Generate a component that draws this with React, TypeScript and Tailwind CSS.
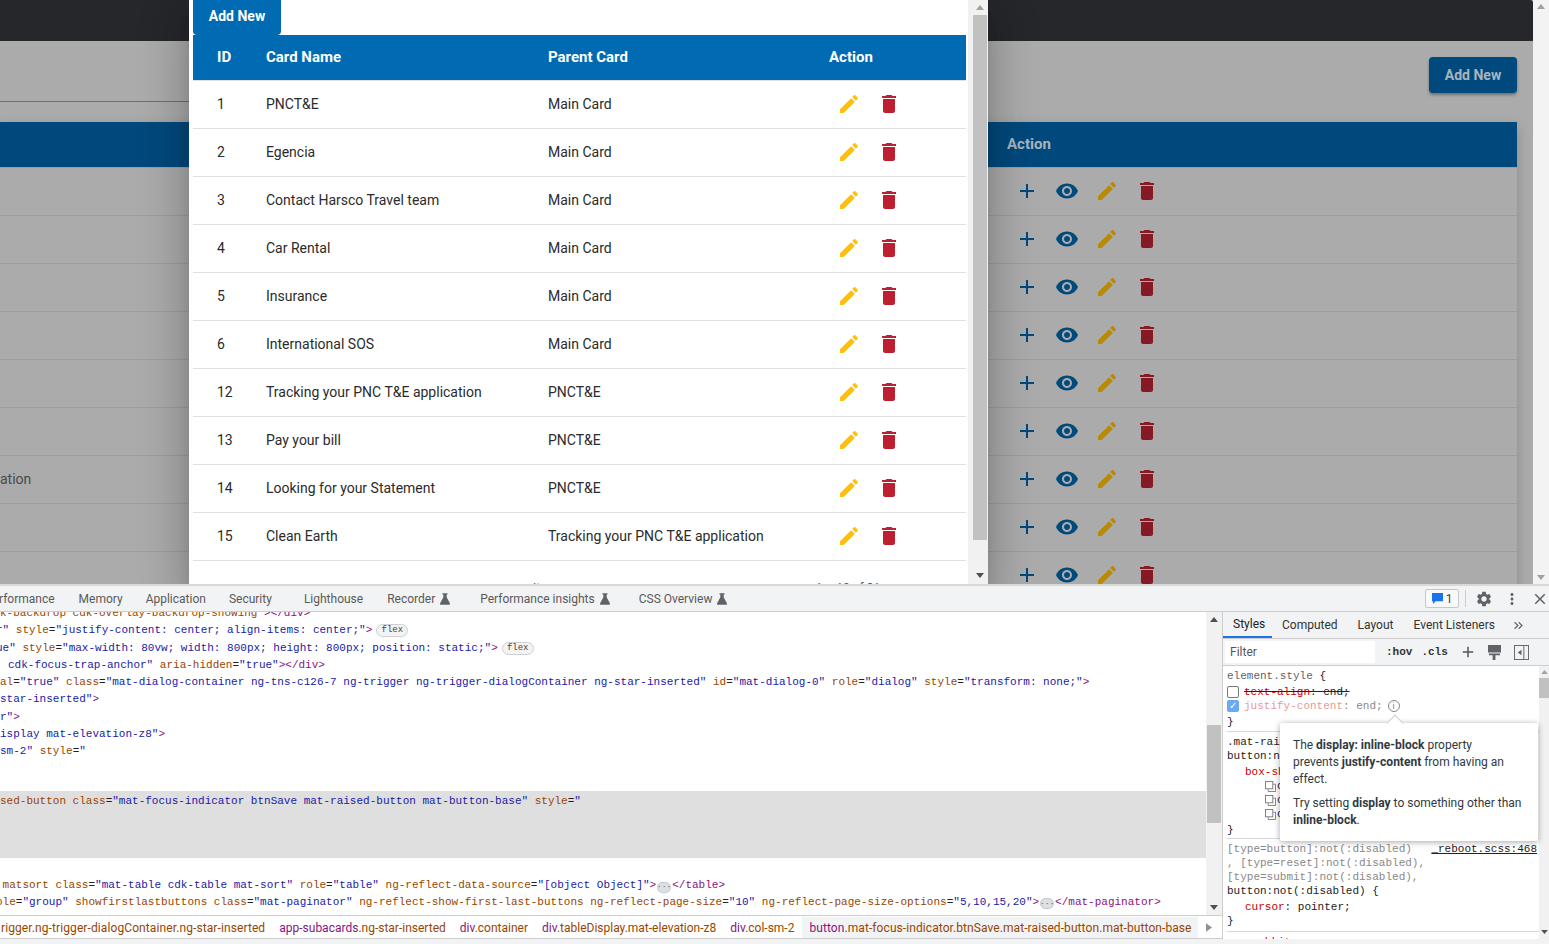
import type { ReactNode } from "react";
import {
  MdAdd,
  MdClose,
  MdDelete,
  MdEdit,
  MdKeyboardDoubleArrowRight,
  MdMoreVert,
  MdSettings,
  MdVisibility,
} from "react-icons/md";

const dialogRows = [
  ["1", "PNCT&E", "Main Card"],
  ["2", "Egencia", "Main Card"],
  ["3", "Contact Harsco Travel team", "Main Card"],
  ["4", "Car Rental", "Main Card"],
  ["5", "Insurance", "Main Card"],
  ["6", "International SOS", "Main Card"],
  ["12", "Tracking your PNC T&E application", "PNCT&E"],
  ["13", "Pay your bill", "PNCT&E"],
  ["14", "Looking for your Statement", "PNCT&E"],
  ["15", "Clean Earth", "Tracking your PNC T&E application"],
];

const backRows = ["", "", "", "", "", "", "ation", "", ""];

const Tag = ({ children }: { children: ReactNode }) => <span className="text-[#881280]">{children}</span>;
const Attr = ({ children }: { children: ReactNode }) => <span className="text-[#994500]">{children}</span>;
const Val = ({ children }: { children: ReactNode }) => <span className="text-[#1a1aa6]">{children}</span>;

const Code = ({ children, className = "" }: { children: ReactNode; className?: string }) => (
  <div className={`h-[17.25px] leading-[17.25px] whitespace-pre ${className}`}>{children}</div>
);

const FlexBadge = () => (
  <span className="inline-block ml-[4px] align-[1px] h-[13px] w-[32px] rounded-full bg-[#f1f3f4] border border-[#d0d0d0] text-center text-[9px] leading-[11px] text-[#444]">
    flex
  </span>
);

const Dots = () => (
  <span className="inline-flex mx-[1px] items-center justify-center align-[-1px] h-[11px] w-[14px] rounded-full bg-[#dde0e3] border border-[#c4c7ca] text-[#555] text-[8px] leading-[6px]">
    ···
  </span>
);

const Arrow = ({ dir, className = "" }: { dir: "up" | "down" | "right"; className?: string }) => {
  const points = dir === "up" ? "0,6 5,0 10,6" : dir === "down" ? "0,0 10,0 5,6" : "0,0 7,5 0,10";
  return (
    <svg viewBox={dir === "right" ? "0 0 7 10" : "0 0 10 6"} className={className} fill="currentColor">
      <polygon points={points} />
    </svg>
  );
};

const Flask = () => (
  <svg viewBox="0 0 12 14" className="w-[10px] h-[12px] ml-[5px] text-[#5f6368]" fill="currentColor">
    <path d="M3 0h6v1.5H8V5l4 7.5c.3.7-.1 1.5-1 1.5H1c-.9 0-1.3-.8-1-1.5L4 5V1.5H3z" />
  </svg>
);

const CopyIcon = () => (
  <svg viewBox="0 0 12 12" className="w-[11px] h-[11px] text-[#777]" fill="none" stroke="currentColor">
    <rect x="0.5" y="0.5" width="8" height="8" />
    <path d="M3.5 9v2.5h8v-8H9" />
  </svg>
);

const DevTab = ({ label, ml, flask }: { label: string; ml: string; flask?: boolean }) => (
  <div className={`flex items-center shrink-0 ${ml}`}>
    <span>{label}</span>
    {flask && <Flask />}
  </div>
);

const Crumb = ({ tag, rest, ml = "ml-[14px]" }: { tag: string; rest: string; ml?: string }) => (
  <span className={`shrink-0 ${ml}`}>
    <Tag>{tag}</Tag>
    <Attr>{rest}</Attr>
  </span>
);

const Prop = ({ children }: { children: ReactNode }) => <span className="text-[#c80000]">{children}</span>;

function BackPage() {
  return (
    <div className="flex h-full bg-[#ababab]">
      <div className="w-[1533px] flex flex-col overflow-hidden">
        <div className="h-[41px] shrink-0 bg-[#25272b] rounded-tr-[3px]" />
        <div className="flex h-[81px] shrink-0">
          <div className="w-[189px] h-[61px] border-b border-[#6f6f6f]" />
          <div className="flex-1 flex justify-end pr-[16px] pt-[16px]">
            <div className="w-[88px] h-[36px] rounded-[4px] bg-[#00497c] text-[#a9b4bc] font-bold text-sm flex items-center justify-center shadow-[0_2px_3px_rgba(0,0,0,0.35)]">
              Add New
            </div>
          </div>
        </div>
        <div className="w-[1517px] shadow-[0_5px_12px_rgba(0,0,0,0.2)]">
          <div className="h-[46px] bg-[#00497c] border-b border-[#9d9d9d] grid grid-cols-[1007px_1fr] items-center text-[#a9b4bc] font-bold text-[15px]">
            <span />
            <span>Action</span>
          </div>
          {backRows.map((text, i) => (
            <div key={i} className="h-[48px] pb-[1px] border-b border-[#9d9d9d] grid grid-cols-[1007px_1fr] items-center text-sm text-[#4a4a4a]">
              <span>{text}</span>
              <div className="flex items-center">
                <span className="w-10 flex justify-center"><MdAdd className="text-[#004a7c] text-2xl" /></span>
                <span className="w-10 flex justify-center"><MdVisibility className="text-[#004a7c] text-2xl" /></span>
                <span className="w-10 flex justify-center"><MdEdit className="text-[#b88a06] text-2xl" /></span>
                <span className="w-10 flex justify-center"><MdDelete className="text-[#851a26] text-2xl" /></span>
              </div>
            </div>
          ))}
        </div>
      </div>
      <div className="w-[16px] bg-[#f3f3f3] flex flex-col items-center justify-between py-[4px] text-[#a0a0a0]">
        <Arrow dir="up" className="w-[8px] h-[5px]" />
        <Arrow dir="down" className="w-[8px] h-[5px]" />
      </div>
    </div>
  );
}

function CardDialog() {
  return (
    <div className="absolute left-[189px] top-0 w-[799px] h-[584px] bg-white flex overflow-hidden shadow-[0_11px_15px_-7px_rgba(0,0,0,0.2),0_24px_38px_3px_rgba(0,0,0,0.14),0_9px_46px_8px_rgba(0,0,0,0.12)]">
      <div className="w-[779px] pl-[4px] pr-[2px] shrink-0">
        <div className="w-[88px] h-[35px] pb-[3px] rounded-b-[4px] bg-[#006ab3] text-white font-bold text-sm flex items-center justify-center">
          Add New
        </div>
        <div className="h-[46px] bg-[#006ab3] border-b border-[#e0e0e0] pl-6 grid grid-cols-[49px_282px_281px_1fr] items-center text-white font-bold text-[15px]">
          <span>ID</span>
          <span>Card Name</span>
          <span>Parent Card</span>
          <span>Action</span>
        </div>
        {dialogRows.map(([id, name, parent]) => (
          <div key={id} className="h-[48px] pb-[1px] border-b border-[#e0e0e0] pl-6 grid grid-cols-[49px_282px_281px_1fr] items-center text-sm text-[#2b2b2b]">
            <span>{id}</span>
            <span>{name}</span>
            <span>{parent}</span>
            <div className="flex items-center">
              <span className="w-10 flex justify-center"><MdEdit className="text-[#ffc107] text-2xl" /></span>
              <span className="w-10 flex justify-center"><MdDelete className="text-[#bd2130] text-2xl" /></span>
            </div>
          </div>
        ))}
        <div className="flex pt-[19px] text-xs text-[#555]">
          <span className="ml-[340px]">Items per page:</span>
          <span className="ml-[200px]">1 – 10 of 31</span>
        </div>
      </div>
      <div className="flex-1 bg-[#f1f1f1] flex flex-col items-center justify-between pt-[5px] pb-[6px] pl-[3px] relative text-[#505050]">
        <Arrow dir="up" className="w-[8px] h-[5px] text-[#a3a3a3]" />
        <div className="w-[14px] h-[525px] mt-[5px] mb-auto bg-[#c1c1c1]" />
        <Arrow dir="down" className="w-[8px] h-[5px]" />
      </div>
    </div>
  );
}

function ElementsPane() {
  return (
    <div className="w-[1206px] h-full overflow-hidden font-['Liberation_Mono',monospace] text-[11px] text-[#222]">
      <div className="-mt-[7px]">
        <Code><Attr>k-backdrop cdk-overlay-backdrop-showing</Attr><Val>"</Val><Tag>&gt;&lt;/div&gt;</Tag></Code>
        <Code className="-ml-[4px]"><Val>r"</Val> <Attr>style</Attr>=<Val>"justify-content: center; align-items: center;"</Val><Tag>&gt;</Tag><FlexBadge /></Code>
        <Code className="-ml-[4px]"><Val>ue"</Val> <Attr>style</Attr>=<Val>"max-width: 80vw; width: 800px; height: 800px; position: static;"</Val><Tag>&gt;</Tag><FlexBadge /></Code>
        <Code className="pl-[8px]"><Val>cdk-focus-trap-anchor"</Val> <Attr>aria-hidden</Attr>=<Val>"true"</Val><Tag>&gt;&lt;/div&gt;</Tag></Code>
        <Code><Attr>al</Attr>=<Val>"true"</Val> <Attr>class</Attr>=<Val>"mat-dialog-container ng-tns-c126-7 ng-trigger ng-trigger-dialogContainer ng-star-inserted"</Val> <Attr>id</Attr>=<Val>"mat-dialog-0"</Val> <Attr>role</Attr>=<Val>"dialog"</Val> <Attr>style</Attr>=<Val>"transform: none;"</Val><Tag>&gt;</Tag></Code>
        <Code><Val>star-inserted"</Val><Tag>&gt;</Tag></Code>
        <Code><Val>r"</Val><Tag>&gt;</Tag></Code>
        <Code><Val>isplay mat-elevation-z8"</Val><Tag>&gt;</Tag></Code>
        <Code><Val>sm-2"</Val> <Attr>style</Attr>=<Val>"</Val></Code>
      </div>
      <div className="mt-[31px] h-[67px] pt-[2px] bg-[#dfdfdf]">
        <Code><Attr>sed-button class</Attr>=<Val>"mat-focus-indicator btnSave mat-raised-button mat-button-base"</Val> <Attr>style</Attr>=<Val>"</Val></Code>
      </div>
      <div className="mt-[19px]">
        <Code className="-ml-[4px]"> <Attr>matsort class</Attr>=<Val>"mat-table cdk-table mat-sort"</Val> <Attr>role</Attr>=<Val>"table"</Val> <Attr>ng-reflect-data-source</Attr>=<Val>"[object Object]"</Val><Tag>&gt;</Tag><Dots /><Tag>&lt;/table&gt;</Tag></Code>
        <Code className="-ml-[4px] -mt-[1px]"><Attr>ole</Attr>=<Val>"group"</Val> <Attr>showfirstlastbuttons class</Attr>=<Val>"mat-paginator"</Val> <Attr>ng-reflect-show-first-last-buttons ng-reflect-page-size</Attr>=<Val>"10"</Val> <Attr>ng-reflect-page-size-options</Attr>=<Val>"5,10,15,20"</Val><Tag>&gt;</Tag><Dots /><Tag>&lt;/mat-paginator&gt;</Tag></Code>
      </div>
    </div>
  );
}

function StylesPane() {
  return (
    <div className="relative flex-1 border-l border-[#cdcdcd] flex flex-col min-w-0">
      <div className="h-[27px] shrink-0 bg-[#f1f3f4] border-b border-[#cdcdcd] flex items-center text-xs text-[#333] relative">
        <span className="w-[49px] h-full pl-[10px] flex items-center border-b-2 border-[#1a73e8] text-[#202124]">Styles</span>
        <span className="ml-[10px]">Computed</span>
        <span className="ml-[20px]">Layout</span>
        <span className="ml-[20px]">Event Listeners</span>
        <MdKeyboardDoubleArrowRight className="ml-[16px] text-[#666] text-[15px]" />
      </div>
      <div className="h-[27px] shrink-0 bg-[#f1f3f4] border-b border-[#cdcdcd] flex items-center text-[#333]">
        <div className="ml-[2px] w-[150px] h-[22px] bg-white text-xs text-[#555] pl-[5px] flex items-center">Filter</div>
        <span className="ml-[11px] font-['Liberation_Mono',monospace] font-bold text-[11px]">:hov</span>
        <span className="ml-[9px] font-['Liberation_Mono',monospace] font-bold text-[11px]">.cls</span>
        <MdAdd className="ml-[11px] text-[18px] text-[#555]" />
        <svg viewBox="0 0 14 16" className="ml-[11px] w-[13px] h-[15px] text-[#5f6368]" fill="currentColor">
          <path d="M0 0h14v8H0zM1 9h12v2H8v5H5v-5H1z" />
        </svg>
        <svg viewBox="0 0 16 16" className="ml-[13px] w-[15px] h-[15px] text-[#5f6368]" fill="none" stroke="currentColor">
          <rect x="0.5" y="0.5" width="15" height="15" />
          <path d="M10.5 1v14" />
          <path d="M8 5v6L4 8z" fill="currentColor" stroke="none" />
        </svg>
      </div>
      <div className="flex-1 flex min-h-0">
        <div className="flex-1 min-w-0 overflow-hidden pl-[4px] font-['Liberation_Mono',monospace] text-[11px] text-[#222] bg-white">
          <div className="pt-[3px] leading-[14px] border-b border-[#d8d8d8] h-[66px]">
            <div className="h-[15px] text-[#5f6368]">element.style <span className="text-[#222]">{"{"}</span></div>
            <div className="h-[15px] flex items-center">
              <span className="w-[12px] h-[12px] border border-[#777] rounded-[2px] mr-[5px] bg-white" />
              <span className="line-through"><Prop>text-align</Prop>: end;</span>
            </div>
            <div className="h-[14px] flex items-center">
              <span className="w-[12px] h-[12px] rounded-[2px] mr-[5px] bg-[#69a9f5] text-white text-[10px] leading-[12px] text-center font-['Roboto',sans-serif]">✓</span>
              <span className="text-[#e59a9a]">justify-content<span className="text-[#888]">:</span> <span className="text-[#888]">end;</span></span>
              <span className="ml-[5px] w-[12px] h-[12px] rounded-full border border-[#888] text-[#888] text-[9px] leading-[10px] text-center font-['Roboto',sans-serif]">i</span>
            </div>
            <div className="h-[14px] pt-[2px]">{"}"}</div>
          </div>
          <div className="h-[107px] border-b border-[#d8d8d8] pt-[3px] leading-[14px]">
            <div>.mat-rai</div>
            <div>button:n</div>
            <div className="pl-[18px] pt-[2px]"><Prop>box-sh</Prop></div>
            <div className="pl-[38px] flex items-center gap-[1px]"><CopyIcon />c</div>
            <div className="pl-[38px] flex items-center gap-[1px]"><CopyIcon />c</div>
            <div className="pl-[38px] flex items-center gap-[1px]"><CopyIcon />c</div>
            <div className="pt-[2px]">{"}"}</div>
          </div>
          <div className="relative h-[93px] border-b border-[#d8d8d8] pt-[3px] leading-[14px]">
            <div className="text-[#888]">[type=button]:not(:disabled)</div>
            <div className="text-[#888]">, [type=reset]:not(:disabled),</div>
            <div className="text-[#888]">[type=submit]:not(:disabled),</div>
            <div>button:not(:disabled) {"{"}</div>
            <div className="pl-[18px] pt-[2px]"><Prop>cursor</Prop>: pointer;</div>
            <div>{"}"}</div>
            <span className="absolute right-[2px] top-[3px] underline text-[#222]">_reboot.scss:468</span>
          </div>
          <div className="pt-[3px] leading-[14px] pl-[18px]"><Prop>-webkit-appearance</Prop></div>
        </div>
        <div className="w-[10px] shrink-0 bg-[#f1f1f1] flex flex-col items-center justify-between pt-[4px] pb-[5px] text-[#505050]">
          <div className="flex flex-col items-center w-full">
            <Arrow dir="up" className="w-[7px] h-[4px] text-[#a3a3a3]" />
            <div className="w-full h-[20px] mt-[4px] bg-[#c1c1c1]" />
          </div>
          <Arrow dir="down" className="w-[7px] h-[4px]" />
        </div>
      </div>
      {/* issue tooltip over the rules */}
      <div className="absolute left-[57px] top-[111px] w-[258px] h-[118px] bg-white rounded-[2px] shadow-[0_1px_6px_rgba(0,0,0,0.35)] px-[13px] pt-[14px] text-xs leading-[17px] text-[#303942]">
        <div className="absolute left-[109px] -top-[6px] w-[12px] h-[12px] rotate-45 bg-white border-l border-t border-[#cfcfcf]" />
        <p>
          The <b>display: inline-block</b> property
          <br />
          prevents <b>justify-content</b> from having an
          <br />
          effect.
        </p>
        <p className="mt-[7px]">
          Try setting <b>display</b> to something other than
          <br />
          <b>inline-block</b>.
        </p>
      </div>
    </div>
  );
}

function DevTools() {
  return (
    <div className="h-[360px] shrink-0 bg-white flex flex-col border-t-2 border-[#d6d8da]">
      <div className="h-[26px] shrink-0 bg-[#f1f3f4] border-b border-[#cdcdcd] flex items-center text-xs text-[#5a5a5a] overflow-hidden">
        <DevTab label="rformance" ml="-ml-[1px]" />
        <DevTab label="Memory" ml="ml-[24px]" />
        <DevTab label="Application" ml="ml-[23px]" />
        <DevTab label="Security" ml="ml-[23px]" />
        <DevTab label="Lighthouse" ml="ml-[32px]" />
        <DevTab label="Recorder" ml="ml-[24px]" flask />
        <DevTab label="Performance insights" ml="ml-[30px]" flask />
        <DevTab label="CSS Overview" ml="ml-[29px]" flask />
        <div className="ml-auto flex items-center">
          <div className="w-[34px] h-[19px] border border-[#c8c8c8] rounded-[2px] flex items-center justify-center gap-[3px] bg-[#f8f9fa] text-[#444]">
            <svg viewBox="0 0 12 12" className="w-[11px] h-[11px] text-[#1a73e8]" fill="currentColor">
              <path d="M0 0h12v9H4l-3 3V9H0z" />
            </svg>
            1
          </div>
          <div className="w-px h-[17px] bg-[#cdcdcd] ml-[6px]" />
          <MdSettings className="ml-[9px] text-[18px] text-[#5f6368]" />
          <MdMoreVert className="ml-[10px] text-[18px] text-[#5f6368]" />
          <MdClose className="ml-[10px] text-[18px] text-[#5f6368]" />
        </div>
      </div>
      <div className="flex h-[327px] shrink-0 overflow-hidden">
        <div className="w-[1222px] shrink-0 flex flex-col">
          <div className="flex h-[303px] shrink-0 overflow-hidden">
            <ElementsPane />
            <div className="w-[16px] shrink-0 bg-[#f1f1f1] flex flex-col items-center justify-between pt-[5px] pb-[5px] text-[#505050]">
              <Arrow dir="up" className="w-[8px] h-[5px]" />
              <div className="w-[14px] h-[98px] mb-[82px] mt-auto bg-[#c1c1c1]" />
              <Arrow dir="down" className="w-[8px] h-[5px]" />
            </div>
          </div>
          <div className="h-[24px] shrink-0 pt-[1px] border-t border-b border-[#cdcdcd] bg-white flex items-center text-xs overflow-hidden whitespace-nowrap">
            <Crumb tag="" rest="rigger.ng-trigger-dialogContainer.ng-star-inserted" ml="ml-[1px] tracking-[0.1px]" />
            <Crumb tag="app-subacards" rest=".ng-star-inserted" />
            <Crumb tag="div" rest=".container" />
            <Crumb tag="div" rest=".tableDisplay.mat-elevation-z8" />
            <Crumb tag="div" rest=".col-sm-2" />
            <div className="ml-[8px] h-full w-[396px] px-[7px] bg-[#f1f3f4] flex items-center shrink-0 tracking-[0.08px]">
              <Tag>button</Tag>
              <Attr>.mat-focus-indicator.btnSave.mat-raised-button.mat-button-base</Attr>
            </div>
            <Arrow dir="right" className="ml-[8px] w-[6px] h-[9px] text-[#909090] shrink-0" />
          </div>
        </div>
        <StylesPane />
      </div>
      <div className="flex-1 bg-[#f1f3f4]" />
    </div>
  );
}

export default function App() {
  return (
    <div className="w-[1549px] h-[944px] overflow-hidden flex flex-col font-['Roboto',sans-serif]">
      <div className="relative h-[584px] shrink-0 overflow-hidden">
        <BackPage />
        <CardDialog />
      </div>
      <DevTools />
    </div>
  );
}
